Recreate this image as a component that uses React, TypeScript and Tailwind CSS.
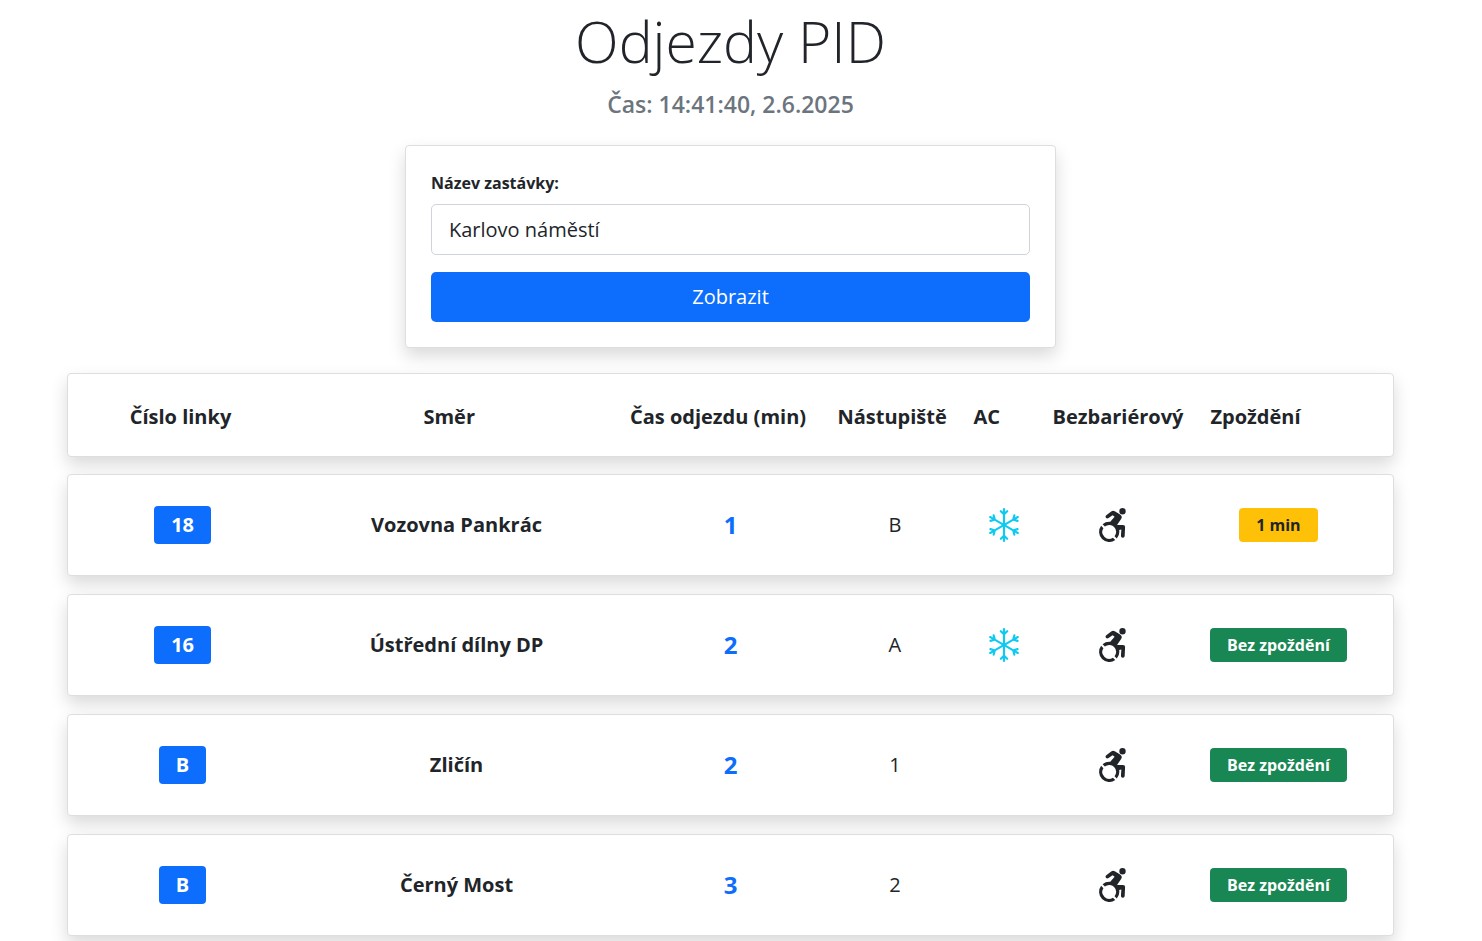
import { useState } from "react";
import { BsPersonWheelchair, BsSnow } from "react-icons/bs";

type Departure = {
  line: string;
  direction: string;
  minutes: number;
  platform: string;
  airConditioned: boolean;
  delay: number;
};

const departures: Departure[] = [
  { line: "18", direction: "Vozovna Pankrác", minutes: 1, platform: "B", airConditioned: true, delay: 1 },
  { line: "16", direction: "Ústřední dílny DP", minutes: 2, platform: "A", airConditioned: true, delay: 0 },
  { line: "B", direction: "Zličín", minutes: 2, platform: "1", airConditioned: false, delay: 0 },
  { line: "B", direction: "Černý Most", minutes: 3, platform: "2", airConditioned: false, delay: 0 },
];

const card = "rounded-[4px] border border-[#dcdedf] bg-white shadow-[0_8px_17px_rgba(0,0,0,0.15)]";

function SearchForm() {
  const [stop, setStop] = useState("Karlovo náměstí");
  return (
    <form
      className={`mx-auto w-full max-w-[651px] p-[25px] ${card}`}
      onSubmit={(event) => event.preventDefault()}
    >
      <label htmlFor="stop" className="mb-2 block text-base leading-[25px] font-bold">
        Název zastávky:
      </label>
      <input
        id="stop"
        type="text"
        value={stop}
        onChange={(event) => setStop(event.target.value)}
        className="block h-[51px] w-full rounded-[5px] border border-[#ced4da] bg-white px-[17px] text-[20px] outline-none"
      />
      <button
        type="submit"
        className="mt-[17px] block h-[50px] w-full rounded-[5px] bg-[#0d6efd] text-[20px] text-white"
      >
        Zobrazit
      </button>
    </form>
  );
}

function DepartureRow({ departure }: { departure: Departure }) {
  const { line, direction, minutes, platform, airConditioned, delay } = departure;
  return (
    <tr className={`grid h-[102px] grid-cols-12 items-center px-[5px] text-center text-[20px] ${card}`}>
      <td className="col-span-2 flex justify-center">
        <span className="rounded-[4px] bg-[#0d6efd] px-[17px] leading-[38px] font-bold text-white">{line}</span>
      </td>
      <td className="col-span-3 font-bold">{direction}</td>
      <td className="col-span-2 text-2xl font-bold text-[#0d6efd]">{minutes}</td>
      <td>{platform}</td>
      <td className="flex justify-center">
        {airConditioned && <BsSnow size={34} className="text-[#0dcaf0]" aria-label="Klimatizace" />}
      </td>
      <td className="flex justify-center">
        <BsPersonWheelchair size={34} aria-label="Bezbariérový" />
      </td>
      <td className="col-span-2 flex justify-center">
        {delay > 0 ? (
          <span className="rounded-[4px] bg-[#ffc107] px-[17px] text-base leading-[34px] font-bold">{delay} min</span>
        ) : (
          <span className="rounded-[4px] bg-[#198754] px-[17px] text-base leading-[34px] font-bold text-white">
            Bez zpoždění
          </span>
        )}
      </td>
    </tr>
  );
}

export default function App() {
  return (
    <div className="pr-[21px] font-['Open_Sans','Noto_Sans',sans-serif] text-[#212529]">
      <main className="mx-auto w-full max-w-[1327px] pb-[18px]">
        <h1 className="pt-[3px] pb-px text-center text-[57px] leading-[76px] font-light">Odjezdy PID</h1>
        <p className="pt-2 pb-6 text-center text-[23px] leading-[33px] font-semibold text-[#6c757d]">
          Čas: 14:41:40, 2.6.2025
        </p>
        <SearchForm />
        <table className="mt-[25px] block">
          <thead className="block">
            <tr
              className={`grid h-[84px] grid-cols-12 items-center pt-[3px] pr-[30px] pl-[5px] text-center text-[20px] whitespace-nowrap ${card}`}
            >
              <th className="col-span-2 px-3">Číslo linky</th>
              <th className="col-span-3 px-3">Směr</th>
              <th className="col-span-2 px-3">Čas odjezdu (min)</th>
              <th className="px-3">Nástupiště</th>
              <th className="px-3">AC</th>
              <th className="px-3">Bezbariérový</th>
              <th className="col-span-2 px-3">Zpoždění</th>
            </tr>
          </thead>
          <tbody className="mt-[17px] flex flex-col gap-[18px]">
            {departures.map((departure) => (
              <DepartureRow key={departure.line + departure.direction} departure={departure} />
            ))}
          </tbody>
        </table>
      </main>
    </div>
  );
}
